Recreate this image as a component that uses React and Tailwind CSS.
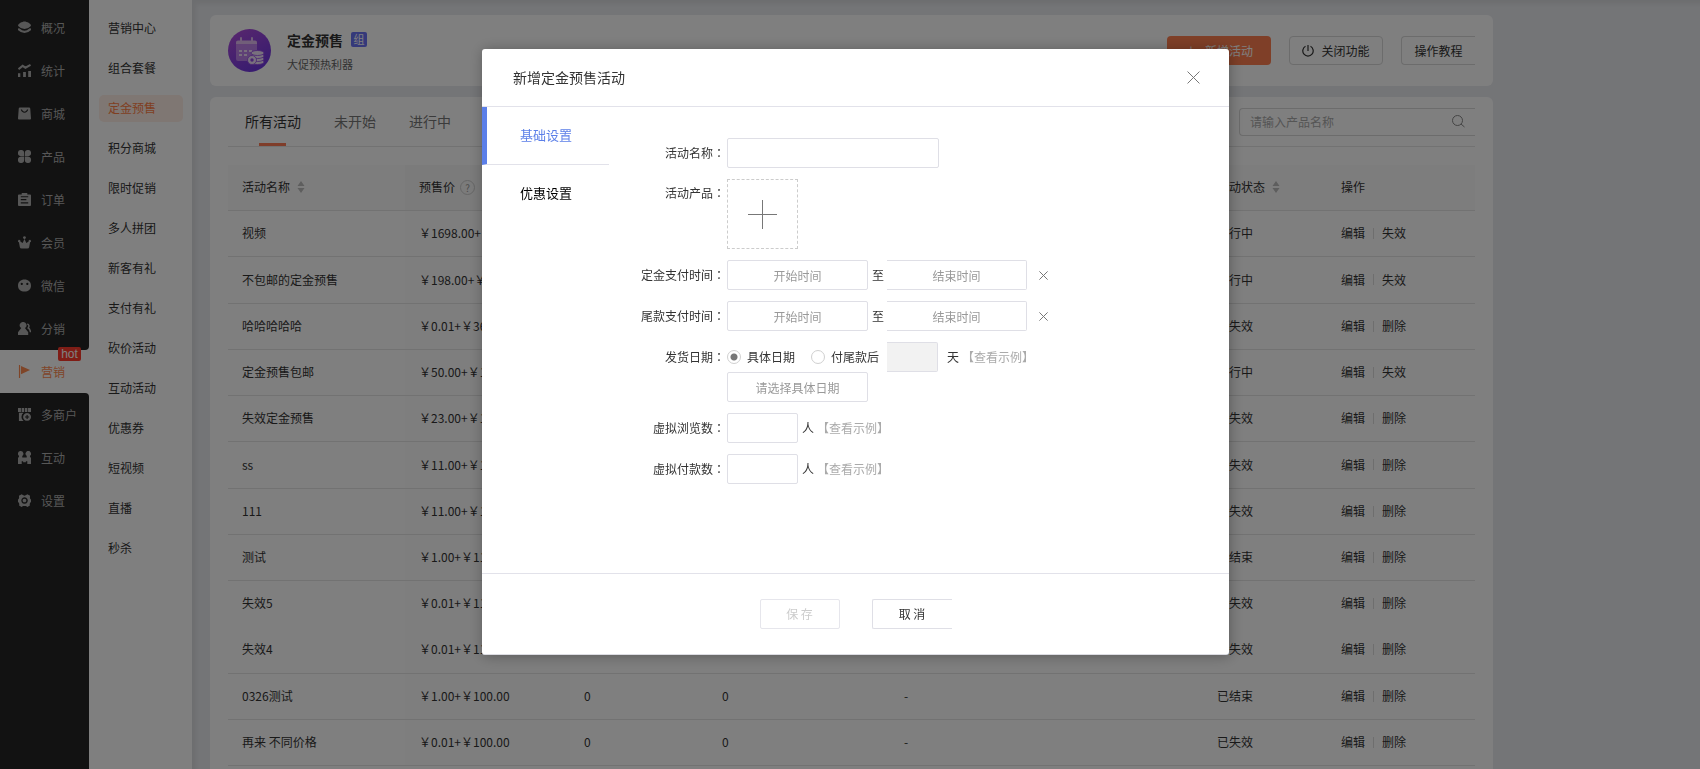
import React from "react";

const nav = [
  ["overview", "概况"],
  ["stats", "统计"],
  ["mall", "商城"],
  ["product", "产品"],
  ["order", "订单"],
  ["member", "会员"],
  ["wechat", "微信"],
  ["share", "分销"],
  ["marketing", "营销"],
  ["merchants", "多商户"],
  ["interact", "互动"],
  ["settings", "设置"],
];

const subNav = [
  "营销中心", "组合套餐", "定金预售", "积分商城", "限时促销", "多人拼团", "新客有礼",
  "支付有礼", "砍价活动", "互动活动", "优惠券", "短视频", "直播", "秒杀",
];

const rows = [
  ["视频", "￥1698.00+￥100.00", "进行中"],
  ["不包邮的定金预售", "￥198.00+￥100.00", "进行中"],
  ["哈哈哈哈哈", "￥0.01+￥36.00", "已失效"],
  ["定金预售包邮", "￥50.00+￥100.00", "进行中"],
  ["失效定金预售", "￥23.00+￥100.00", "已失效"],
  ["ss", "￥11.00+￥100.00", "已失效"],
  ["111", "￥11.00+￥100.00", "已失效"],
  ["测试", "￥1.00+￥111.00", "已结束"],
  ["失效5", "￥0.01+￥111.00", "已失效"],
  ["失效4", "￥0.01+￥111.00", "已失效"],
  ["0326测试", "￥1.00+￥100.00", "已结束"],
  ["再来 不同价格", "￥0.01+￥100.00", "已失效"],
];

const glyphs = {
  overview: (
    <>
      <path d="M7 .5C9.500 .5 14 3 14 4.700S9.500 8.700 7 8.700 0 6.400 0 4.700 4.500 .5 7 .5" />
      <path d="M1 9Q7 14.500 13 9" fill="none" stroke="currentColor" strokeWidth="2.400" strokeLinecap="round" />
    </>
  ),
  stats: (
    <>
      <path d="M.5 5.500 5 2l3 2 5.500-3" fill="none" stroke="currentColor" strokeWidth="2.200" />
      <path d="M0 10h2.500v4H0zM5.500 8.500h3V14h-3zM11 7.500h3V14h-3z" />
    </>
  ),
  mall: (
    <path fillRule="evenodd" d="M2 .5h10q1 0 1.200 1L14 12.500q0 1-1 1H1q-1 0-1-1L.8 1.500Q1 .5 2 .5ZM3 2.800q1 3.400 4 3.400t4-3.400h-1.300Q9.200 5 7 5T4.300 2.800Z" />
  ),
  product: (
    <path d="M3.300 0A3.200 3.200 0 0 1 6.600 3V6.600H3A3.300 3.300 0 0 1 3.300 0M10.700 0A3.200 3.200 0 0 0 7.400 3V6.600H11A3.300 3.300 0 0 0 10.700 0M3.300 14A3.200 3.200 0 0 0 6.600 11V7.400H3A3.300 3.300 0 0 0 3.300 14M10.700 14A3.200 3.200 0 0 1 7.400 11V7.400H11A3.300 3.300 0 0 1 10.700 14" />
  ),
  order: (
    <path fillRule="evenodd" d="M4 0h6v1.500h3q1 0 1 1V13q0 1-1 1H1q-1 0-1-1V2.500q0-1 1-1h3ZM3 3.500v1h8v-1ZM3 6.500v1.200h6V6.500ZM3 10v1.200h8V10Z" />
  ),
  member: (
    <path d="M7 3.200a1.500 1.500 0 1 0-.1 0L5 7.500 2.500 6A1.300 1.300 0 1 0 1 6.700L2 12q.2 1.500 2 1.500h6q1.800 0 2-1.500l1-5.300A1.300 1.300 0 1 0 11.500 6L9 7.500Z" />
  ),
  wechat: (
    <path fillRule="evenodd" d="M7 .5C11 .5 14 3 14 7.200 14 11 11 13.500 7 13.500S0 11 0 7.200C0 3 3 .5 7 .5M4 4a1.200 1.200 0 1 0 .1 0M10 4a1.200 1.200 0 1 0 .1 0" />
  ),
  share: (
    <>
      <path d="M5.500 0a3.500 3.500 0 0 1 2 6.500L11 11v3H0v-3l3.500-4.500A3.500 3.500 0 0 1 5.500 0" />
      <path d="M10 2q3 1.500 1 4.500 2 1 2.500 4.500" fill="none" stroke="currentColor" strokeWidth="1.600" />
    </>
  ),
  marketing: (
    <path d="M1 0h1.300v14H1ZM3.200 1 13 5.500 3.200 10Z" />
  ),
  merchants: (
    <>
      <path d="M0 0h3.200v4.200H0zM3.900 0h2.700v4.200H3.900zM7.400 0h2.700v4.200H7.400zM10.800 0H14v4.200h-3.200zM1 5.200h5A5.400 5.400 0 0 0 6 14H1Z" />
      <path fillRule="evenodd" d="M9.800 5.400a4.200 4.200 0 1 1-.1 0M9.200 7.500v1.600H7.600v1.200h1.600v1.600h1.200v-1.600H12V9.100h-1.600V7.500Z" />
    </>
  ),
  interact: (
    <path d="M3 0a2.900 2.900 0 0 1 1.600 5.300V7h4.800V5.300A2.900 2.900 0 1 1 12.800 5.300Q13 6.500 14 7.500V14h-4v-3H8.500v1h-3v-1H4v3H0V7.500Q1 6.500 1.200 5.300A2.900 2.900 0 0 1 3 0" />
  ),
  settings: (
    <path
      fillRule="evenodd"
      d="M5.200 1.200 7 1.800 8.800 1.200 10 .3 13 2 12.800 3.800 13.200 5.400 14 6v2.500l-.9.900-.5 1.500.2 1.500-2.700 1.500-1.500-.9H5.400l-1.500.9L1.200 12.400l.2-1.500L.9 9.400 0 8.500V6l.8-.6.4-1.600L1 2 4 .3ZM7 3.500A3.500 3.500 0 1 0 7.100 3.500ZM7 5A2 2 0 1 1 6.900 5Z"
    />
  ),
};

function Sorter() {
  return (
    <svg width="8" height="12" viewBox="0 0 8 12" className="fill-[#bcbcbc]" aria-hidden="true">
      <path d="M4 0 7.500 5h-7ZM4 12 7.500 7h-7Z" />
    </svg>
  );
}

function Cross({ size }) {
  return (
    <svg width={size} height={size} viewBox="0 0 12 12" stroke="#777" fill="none" aria-hidden="true">
      <path d="M.5.5 11.500 11.500M11.500.5.5 11.500" vectorEffect="non-scaling-stroke" />
    </svg>
  );
}

function PresaleLogo() {
  return (
    <svg width="43" height="43" viewBox="0 0 43 43" className="shrink-0" aria-hidden="true">
      <defs>
        <linearGradient id="logo" x1="0" y1="0" x2="0.600" y2="1">
          <stop offset="0" stopColor="#b44fdc" />
          <stop offset="1" stopColor="#7038e0" />
        </linearGradient>
      </defs>
      <circle cx="21.500" cy="21.500" r="21.500" fill="url(#logo)" />
      <rect x="8" y="12" width="21" height="20" rx="2" fill="#d9a5f2" opacity=".65" />
      <path d="M8 15v-1.500q0-2 2-2h17q2 0 2 2V15Z" fill="#e2bdf2" />
      <path d="M13 9v4M24 9v4" stroke="#e2bdf2" strokeWidth="2" strokeLinecap="round" />
      <path d="M11 21h3v2h-3zM16 21h3v2h-3zM21 21h3v2h-3zM11 25h3v2h-3zM16 25h3v2h-3z" fill="#f0dcfa" />
      <g fill="#f0e2fa" stroke="#9448e6" strokeWidth=".8">
        <ellipse cx="29.500" cy="33" rx="6.500" ry="2.500" />
        <ellipse cx="29.500" cy="30" rx="6.500" ry="2.500" />
        <ellipse cx="29.500" cy="27" rx="6.500" ry="2.500" />
        <ellipse cx="29.500" cy="24" rx="6.500" ry="2.500" />
        <circle cx="24" cy="31" r="4.500" />
      </g>
      <circle cx="24" cy="31" r="1.700" fill="#9448e6" />
    </svg>
  );
}

function Sidebar() {
  return (
    <nav className="w-[89px] shrink-0 bg-white">
      <div className="h-[6px] bg-[#242424]" />
      {nav.map(([key, label], i) => {
        const active = key === "marketing";
        return (
          <a
            key={key}
            href={"#" + key}
            className={
              "relative flex h-[43px] items-center gap-[10px] pl-[18px] text-[12px] " +
              (active
                ? "bg-white text-[#ff8a50]"
                : "bg-[#242424] text-[#aeaeae]" +
                  (i === 7 ? " rounded-br-[4px]" : "") +
                  (i === 9 ? " rounded-tr-[4px]" : ""))
            }
          >
            <svg width="13" height="13" viewBox="0 0 14 14" fill="currentColor" aria-hidden="true">
              {glyphs[key]}
            </svg>
            {label}
            {active && (
              <span className="absolute -top-[3px] left-[58px] flex h-[14px] w-[23px] items-center justify-center rounded-[2px] bg-[#ff3a2c] font-['Liberation_Sans'] text-[12px] text-white">
                hot
              </span>
            )}
          </a>
        );
      })}
      <div className="h-full bg-[#242424]" />
    </nav>
  );
}

function SubMenu() {
  return (
    <nav className="flex w-[103px] shrink-0 flex-col gap-[13px] bg-white pt-[15px] pr-[9px] pl-[10px] text-[12px] text-[#333]">
      {subNav.map((label) => (
        <a
          key={label}
          href="#sub"
          className={
            "flex h-[27px] shrink-0 items-center rounded-[5px] pb-[2px] pl-[9px] " +
            (label === "定金预售" ? "bg-[#ffeee6] text-[#ff7f45]" : "")
          }
        >
          {label}
        </a>
      ))}
    </nav>
  );
}

function PageHeader() {
  return (
    <header className="flex h-[71px] items-center rounded-[6px] bg-white px-[18px]">
      <PresaleLogo />
      <div className="ml-4 flex-1 pt-1">
        <div className="flex items-center gap-2">
          <h1 className="text-[14px] leading-[22px] font-bold text-[#333]">定金预售</h1>
          <span className="flex h-[15px] w-[16px] items-center justify-center rounded-[2px] bg-[#6b72f5] text-[11px] text-white">
            组
          </span>
        </div>
        <p className="text-[11px] leading-[26px] text-[#666]">大促预热利器</p>
      </div>
      <div className="flex gap-[18px] text-[12px] text-[#333]">
        <button className="flex h-[29px] w-[104px] items-center justify-center gap-[8px] rounded-[4px] bg-[#ff7f50] text-white">
          <span>＋</span>新增活动
        </button>
        <button className="flex h-[29px] w-[94px] items-center justify-center gap-[7px] rounded-[4px] border border-[#d8d8d8]">
          <svg width="12" height="12" viewBox="0 0 12 12" fill="none" stroke="#333" strokeWidth="1.200" aria-hidden="true">
            <path d="M6 0v6M3.500 1.300a5.200 5.200 0 1 0 5 0" />
          </svg>
          关闭功能
        </button>
        <button className="h-[29px] w-[74px] rounded-l-[4px] border border-r-0 border-[#d8d8d8]">操作教程</button>
      </div>
    </header>
  );
}

function ActivityTable() {
  return (
    <table className="mt-[18px] w-full table-fixed border-collapse text-left text-[12px] text-[#333]">
      <colgroup>
        <col className="w-[177px]" />
        <col className="w-[165px]" />
        <col className="w-[138px]" />
        <col className="w-[182px]" />
        <col />
        <col className="w-[124px]" />
        <col className="w-[148px]" />
      </colgroup>
      <thead>
        <tr className="h-[45px] border-b border-[#e4e4e4] bg-[#fafafa] [&>th]:px-[14px] [&>th]:font-normal">
          <th><span className="flex items-center gap-[7px]">活动名称<Sorter /></span></th>
          <th className="bg-[#f7f7f7]">
            <span className="flex items-center gap-[5px]">
              预售价
              <span className="flex size-[15px] items-center justify-center rounded-full border border-[#ccc] text-[10px] text-[#999]">?</span>
            </span>
          </th>
          <th></th>
          <th></th>
          <th></th>
          <th><span className="flex items-center gap-[7px] whitespace-nowrap">活动状态<Sorter /></span></th>
          <th>操作</th>
        </tr>
      </thead>
      <tbody className="[&>tr:nth-child(4n+2)]:h-[47px]">
        {rows.map(([name, price, state]) => (
          <tr
            key={name}
            className={"h-[46px] [&>td]:px-[14px] " + (name === "失效5" ? "" : "border-b border-[#e4e4e4]")}
          >
            <td>{name}</td>
            <td className="bg-[#fcfcfc] whitespace-nowrap">{price}</td>
            <td>0</td>
            <td>0</td>
            <td>-</td>
            <td>{state}</td>
            <td>
              <span className="flex items-center gap-[8px]">
                <a href="#edit">编辑</a>
                <i className="h-[11px] w-px bg-[#ddd]" />
                <a href="#act">{state === "进行中" ? "失效" : "删除"}</a>
              </span>
            </td>
          </tr>
        ))}
      </tbody>
    </table>
  );
}

const field = "h-[30px] rounded-[2px] border border-[#dfdfe6] bg-white text-center placeholder:text-[#999] outline-none";

function Row({ label, id, children, tall }) {
  return (
    <div className={"flex " + (tall ? "items-start" : "items-center")}>
      <label htmlFor={id} className="w-[116px] shrink-0 text-right leading-[28px]">
        {label}
        <span className="font-['Noto_Sans_CJK_TC']">：</span>
      </label>
      <div className="ml-[2px] flex items-center">{children}</div>
    </div>
  );
}

function Period({ id, label }) {
  return (
    <Row id={id} label={label}>
      <input id={id} className={field + " w-[141px]"} placeholder="开始时间" />
      <span className="mr-[3px] ml-1">至</span>
      <input aria-label={label + "结束"} className={field + " w-[140px] rounded-l-none border-l-0"} placeholder="结束时间" />
      <button type="button" aria-label="清除" className="ml-[12px]"><Cross size={9} /></button>
    </Row>
  );
}

const radio = "mr-[6px] size-[14px] shrink-0 appearance-none rounded-full border border-[#d0d0d0] bg-white checked:bg-[radial-gradient(#777_3px,transparent_4px)]";

function Dialog() {
  return (
    <div className="fixed inset-0 flex items-start justify-center bg-black/50 pt-[49px] pl-[11px]">
      <section
        role="dialog"
        aria-label="新增定金预售活动"
        className="w-[747px] rounded-[3px] border-b border-[#dcdce2] bg-white text-[12px] text-[#333] shadow-[1px_1px_14px_rgba(0,0,0,0.3)]"
      >
        <div className="flex h-[58px] items-center justify-between border-b border-[#e2e2ea] pr-[29px] pl-[31px]">
          <h2 className="text-[14px]">新增定金预售活动</h2>
          <button aria-label="关闭"><Cross size={13} /></button>
        </div>
        <div className="flex min-h-[466px]">
          <div className="flex w-[127px] flex-col text-[13px] text-black">
            <button className="h-[58px] border-b border-l-[5px] border-[#e2e2ea] border-l-[#5b7fe8] pb-[2px] pl-[33px] text-left text-[#5b7fe8]">
              基础设置
            </button>
            <button className="h-[58px] pb-[2px] pl-[38px] text-left">优惠设置</button>
          </div>
          <form className="flex flex-1 flex-col gap-[11px] pt-[31px]">
            <Row id="name" label="活动名称">
              <input id="name" className={field + " w-[212px]"} />
            </Row>
            <Row id="product" label="活动产品" tall>
              <button id="product" type="button" aria-label="添加产品" className="flex h-[70px] w-[71px] items-center justify-center border border-dashed border-[#ccc]">
                <svg width="29" height="29" viewBox="0 0 29 29" stroke="#777" aria-hidden="true">
                  <path d="M14.500 0v29M0 14.500h29" />
                </svg>
              </button>
            </Row>
            <Period id="deposit" label="定金支付时间" />
            <Period id="balance" label="尾款支付时间" />
            <div>
              <Row id="fixed" label="发货日期">
                <input id="fixed" type="radio" name="ship" defaultChecked className={radio} />
                <label htmlFor="fixed">具体日期</label>
                <input id="after" type="radio" name="ship" className={radio + " ml-[16px]"} />
                <label htmlFor="after">付尾款后</label>
                <input aria-label="天数" disabled className="ml-[8px] h-[30px] w-[51px] rounded-r-[2px] border border-l-0 border-[#dfdfe6] bg-[#f2f2f2]" />
                <span className="mr-[3px] ml-[9px]">天</span>
                <a href="#sample" className="text-[#aaa]">【查看示例】</a>
              </Row>
              <div className="flex">
                <input aria-label="具体日期" className={field + " ml-[118px] w-[141px]"} placeholder="请选择具体日期" />
              </div>
            </div>
            <Row id="views" label="虚拟浏览数">
              <input id="views" className={field + " w-[71px]"} />
              <span className="mr-[3px] ml-1">人</span>
              <a href="#sample" className="text-[#aaa]">【查看示例】</a>
            </Row>
            <Row id="pays" label="虚拟付款数">
              <input id="pays" className={field + " w-[71px]"} />
              <span className="mr-[3px] ml-1">人</span>
              <a href="#sample" className="text-[#aaa]">【查看示例】</a>
            </Row>
          </form>
        </div>
        <div className="flex h-[81px] items-center justify-center gap-[32px] border-t border-[#e2e2ea]">
          <button disabled className="h-[30px] w-[80px] rounded-[2px] border border-[#e6e6ec] text-[#ccc]">保 存</button>
          <button className="h-[30px] w-[80px] rounded-l-[2px] border border-r-0 border-[#dfdfe6]">取 消</button>
        </div>
      </section>
    </div>
  );
}

export default function App() {
  return (
    <div className="flex h-screen overflow-hidden bg-[#e8eaee] font-['Noto_Sans_CJK_SC',sans-serif]">
      <Sidebar />
      <SubMenu />
      <main className="flex min-w-0 flex-1 flex-col gap-[11px] pt-[15px] pr-[207px] pl-[18px] shadow-[inset_4px_4px_4px_rgba(0,0,0,0.06)]">
        <PageHeader />
        <section className="min-h-0 flex-1 rounded-t-[6px] bg-white px-[18px]">
          <div className="flex h-[50px] items-center gap-[33px] border-b border-[#e4e4e4] pl-[17px] text-[14px] text-[#777]">
            <button className="relative h-full text-[#333]">
              所有活动
              <i className="absolute bottom-0 left-[14px] h-[3px] w-[27px] bg-[#ff7a55]" />
            </button>
            <button>未开始</button>
            <button>进行中</button>
            <label className="ml-auto flex h-[28px] w-[236px] items-center rounded-l-[4px] border border-r-0 border-[#d8d8d8] pr-[10px] pl-[10px]">
              <input aria-label="搜索产品" placeholder="请输入产品名称" className="min-w-0 flex-1 text-[12px] outline-none placeholder:text-[#aaa]" />
              <svg width="13" height="13" viewBox="0 0 13 13" fill="none" stroke="#888" aria-hidden="true">
                <circle cx="5.500" cy="5.500" r="5" />
                <path d="m9 9 3.500 3" />
              </svg>
            </label>
          </div>
          <ActivityTable />
        </section>
      </main>
      <Dialog />
    </div>
  );
}
